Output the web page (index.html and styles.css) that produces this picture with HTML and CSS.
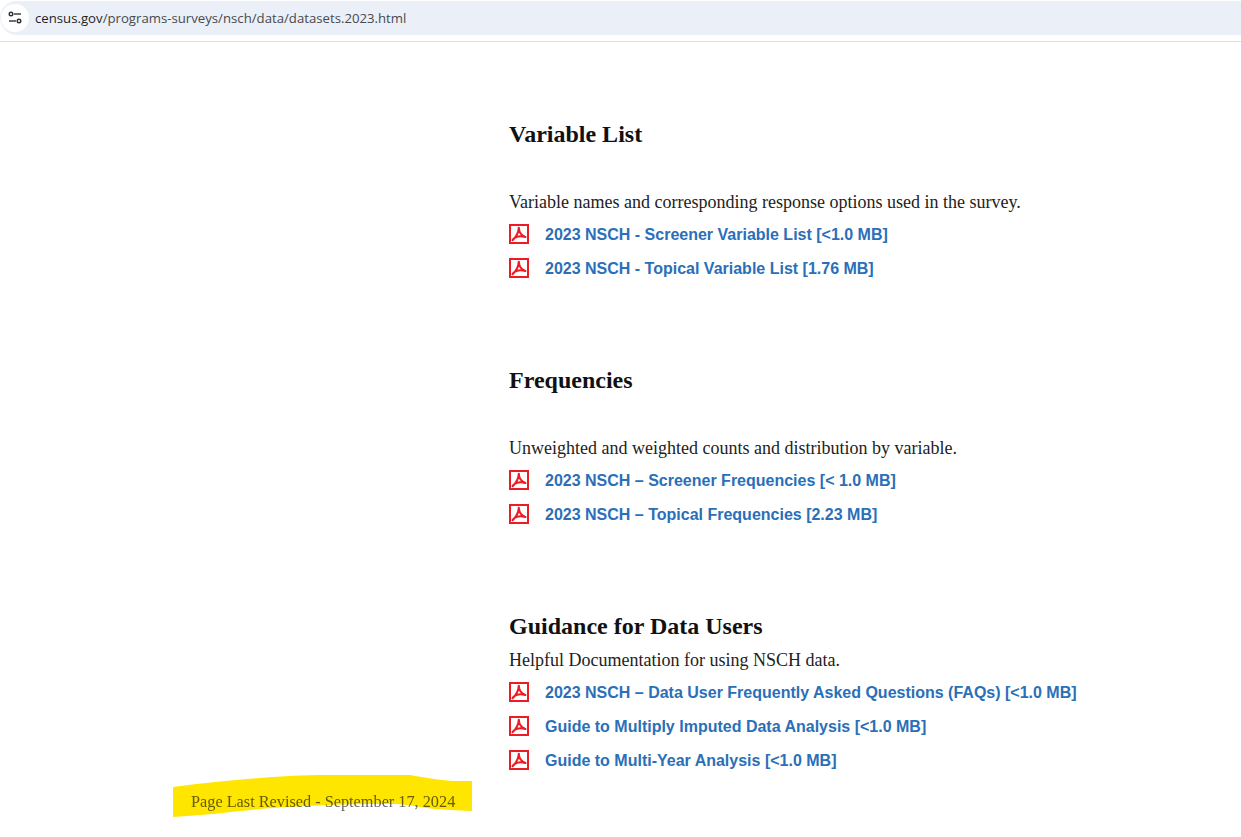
FILE: index.html
```html
<!DOCTYPE html>
<html lang="en">
<head>
<meta charset="utf-8">
<title>NSCH Datasets 2023</title>
<link rel="stylesheet" href="styles.css">
</head>
<body>
<header class="toolbar">
  <div class="omnibox">
    <span class="site-btn">
      <svg width="16" height="16" viewBox="0 0 16 16" fill="none" stroke="#2f3133" stroke-width="1.4"><circle cx="4" cy="4" r="1.8"/><path d="M7 4h7"/><path d="M2 11h7"/><circle cx="12" cy="11" r="1.8"/></svg>
    </span>
    <span class="url"><span class="host">census.gov</span>/programs-surveys/nsch/data/datasets.2023.html</span>
  </div>
</header>
<div class="page">
  <aside class="side">
    <div class="revised">
      <span class="revised-text">Page Last Revised - September 17, 2024</span>
      <svg class="marker" width="300" height="44" viewBox="0 0 300 44"><path fill="#ffe600" d="M0 13C30 9 60 6 87 4C110 2 130 1 154 1L237 1C250 3 265 6 280 7L299 7L299 37C285 36 268 36 254 34C240 32 230 30 220 30C200 30 175 30 154 31C130 32 110 33 87 35C60 38 30 41 0 43Z"/></svg>
    </div>
  </aside>
  <main class="content">
    <section class="block">
      <h2>Variable List</h2>
      <p class="gap">Variable names and corresponding response options used in the survey.</p>
      <a class="doc" href="#"><svg class="pdf" viewBox="0 0 20 20"><use href="#pdf"/></svg>2023 NSCH - Screener Variable List [&lt;1.0 MB]</a>
      <a class="doc" href="#"><svg class="pdf" viewBox="0 0 20 20"><use href="#pdf"/></svg>2023 NSCH - Topical Variable List [1.76 MB]</a>
    </section>
    <section class="block">
      <h2>Frequencies</h2>
      <p class="gap">Unweighted and weighted counts and distribution by variable.</p>
      <a class="doc" href="#"><svg class="pdf" viewBox="0 0 20 20"><use href="#pdf"/></svg>2023 NSCH – Screener Frequencies [&lt; 1.0 MB]</a>
      <a class="doc" href="#"><svg class="pdf" viewBox="0 0 20 20"><use href="#pdf"/></svg>2023 NSCH – Topical Frequencies [2.23 MB]</a>
    </section>
    <section class="block">
      <h2>Guidance for Data Users</h2>
      <p>Helpful Documentation for using NSCH data.</p>
      <a class="doc" href="#"><svg class="pdf" viewBox="0 0 20 20"><use href="#pdf"/></svg>2023 NSCH – Data User Frequently Asked Questions (FAQs) [&lt;1.0 MB]</a>
      <a class="doc" href="#"><svg class="pdf" viewBox="0 0 20 20"><use href="#pdf"/></svg>Guide to Multiply Imputed Data Analysis [&lt;1.0 MB]</a>
      <a class="doc" href="#"><svg class="pdf" viewBox="0 0 20 20"><use href="#pdf"/></svg>Guide to Multi-Year Analysis [&lt;1.0 MB]</a>
    </section>
  </main>
</div>
<svg class="defs" width="0" height="0"><defs><g id="pdf"><rect x="1" y="1" width="18" height="18" fill="#fff" stroke="#ed1c24" stroke-width="2"/><path fill="none" stroke="#ed1c24" stroke-width="2.1" stroke-linecap="round" stroke-linejoin="round" d="M9.8 3.8C9.6 8 7 13 3.6 16.2M9.8 3.8C10 8 12.5 11.5 16.4 13M16.4 13C13 12 8 12.2 5.5 14C4.4 14.8 3.8 15.6 3.6 16.2"/></g></defs></svg>
</body>
</html>
```
FILE: styles.css
```css
* { box-sizing: border-box; }
html, body { margin: 0; height: 100%; }
body { background: #fff; overflow: hidden; color: #1a1a1a; }

.toolbar { height: 42px; padding-top: 1px; border-bottom: 1px solid #dfdfdf; }
.omnibox { height: 34px; padding-left: 1px; background: #ebeff8; border-radius: 17px 0 0 17px; display: flex; align-items: center; gap: 6px; }
.site-btn { width: 28px; height: 28px; border-radius: 50%; background: #fff; display: flex; align-items: center; justify-content: center; }
.url { font: 13.19px/18px "Open Sans", "Noto Sans", sans-serif; color: #474a4f; }
.host { color: #1f1f1f; }

.page { display: grid; grid-template-columns: 509px 1fr; }
.side { position: relative; }
.revised { position: absolute; left: 173px; top: 732px; width: 300px; height: 44px; isolation: isolate; }
.marker { position: absolute; inset: 0; mix-blend-mode: multiply; }
.revised-text { position: absolute; left: 18px; top: 19px; white-space: nowrap; font: 16.27px/18px "Liberation Serif", serif; color: #666; }

.content { padding-top: 76px; font-family: "Liberation Serif", serif; }
.block { margin-bottom: 78px; }
.block:last-child { margin-bottom: 0; }
h2 { margin: 0; font: bold 24px/32px "Liberation Serif", serif; color: #111; }
p { margin: 0 0 1px; font-size: 18px; line-height: 30px; color: #222; }
.gap { margin-top: 37px; }
.block:last-child p { margin-top: 3px; }
.doc { display: flex; align-items: center; gap: 16px; height: 34px; font: bold 16px/20px "Liberation Sans", sans-serif; color: #2a6fb8; text-decoration: none; white-space: nowrap; }
.pdf { width: 20px; height: 20px; flex: none; margin-top: -2px; }
.defs { position: absolute; }
```
